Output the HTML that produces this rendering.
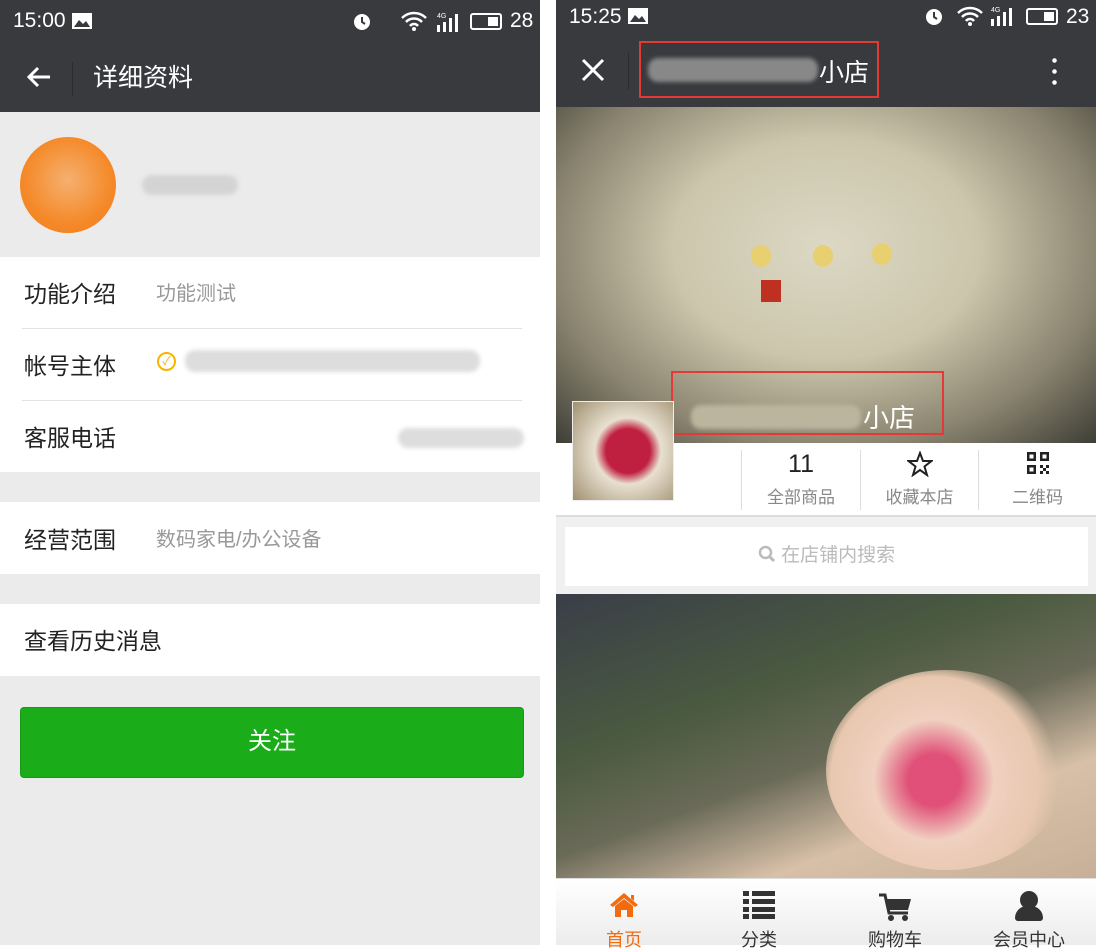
<!DOCTYPE html><html><head><meta charset="utf-8"><style>
*{margin:0;padding:0;box-sizing:border-box}
body{width:1096px;height:945px;background:#fff;font-family:"Liberation Sans","Noto Sans CJK SC",sans-serif;position:relative;overflow:hidden}
.a{position:absolute}
.L{left:0;top:0;width:540px;height:945px;background:#ebebeb}
.R{left:556px;top:0;width:540px;height:945px;background:#f0f0f0}
.row{position:absolute;left:0;width:540px;background:#fff}
.lab{position:absolute;left:24px;font-size:23px;color:#222}
.val{position:absolute;left:156px;font-size:20px;color:#999}
.blur{position:absolute;background:#d4d4d4;border-radius:10px;filter:blur(2px)}
</style></head><body>
<div class="a L">
 <div class="a" style="left:0;top:0;width:540px;height:112px;background:#393a3e"></div>
 <div class="a" style="left:13px;top:9px;color:#fff;font-size:21px">15:00</div>
 <svg class="a" style="left:72px;top:13px" width="20" height="16"><rect width="20" height="16" fill="#fff"/><path d="M2 14 L7 7 L11 11 L14 8 L18 14Z" fill="#393a3e"/></svg>
 <svg class="a" style="left:352px;top:11px" width="20" height="20"><circle cx="10" cy="11" r="8" fill="#fff"/><path d="M10 6 V11 L13 13" stroke="#393a3e" stroke-width="2" fill="none"/></svg>
 <svg class="a" style="left:400px;top:10px" width="28" height="22"><path d="M2 8 A17 17 0 0 1 26 8 M6 12 A11 11 0 0 1 22 12 M10 16 A5 5 0 0 1 18 16" stroke="#fff" stroke-width="2.5" fill="none"/><circle cx="14" cy="19" r="2" fill="#fff"/></svg>
 <svg class="a" style="left:436px;top:11px" width="28" height="22"><text x="1" y="7" font-size="7" fill="#fff" font-family="Liberation Sans">4G</text><rect x="1" y="14" width="3" height="7" fill="#fff"/><rect x="7" y="11" width="3" height="10" fill="#fff"/><rect x="13" y="7" width="3" height="14" fill="#fff"/><rect x="19" y="3" width="3" height="18" fill="#fff"/></svg>
 <div class="a" style="left:470px;top:13px;width:32px;height:17px;border:2px solid #fff;border-radius:3px"><div style="margin:2px 2px 0 auto;width:10px;height:9px;background:#fff"></div></div>
 <div class="a" style="left:510px;top:9px;color:#fff;font-size:21px">28</div>
 <svg class="a" style="left:26px;top:65px" width="26" height="24"><path d="M24 12 H3 M12 3 L3 12 L12 21" stroke="#fff" stroke-width="3" fill="none"/></svg>
 <div class="a" style="left:72px;top:62px;width:1px;height:34px;background:#2b2c2f"></div>
 <div class="a" style="left:93px;top:58px;color:#fff;font-size:25px">详细资料</div>
 <div class="a" style="left:20px;top:137px;width:96px;height:96px;border-radius:50%;background:radial-gradient(circle at 50% 45%,#f5b070,#f58a2a 60%,#f07a18)"></div>
 <div class="blur" style="left:142px;top:175px;width:96px;height:20px"></div>
 <div class="row" style="top:257px;height:215px"></div>
 <div class="lab" style="top:275px">功能介绍</div><div class="val" style="top:277px">功能测试</div>
 <div class="a" style="left:22px;top:328px;width:500px;height:1px;background:#e3e3e3"></div>
 <div class="lab" style="top:347px">帐号主体</div>
 <div class="a" style="left:157px;top:352px;width:19px;height:19px;border-radius:50%;border:2px solid #f4b400;color:#f4b400;font-size:12px;text-align:center;line-height:15px">✓</div>
 <div class="blur" style="left:185px;top:350px;width:295px;height:22px;background:#ddd"></div>
 <div class="a" style="left:22px;top:400px;width:500px;height:1px;background:#e3e3e3"></div>
 <div class="lab" style="top:419px">客服电话</div>
 <div class="blur" style="left:398px;top:428px;width:126px;height:20px;background:#ddd"></div>
 <div class="row" style="top:502px;height:72px"></div>
 <div class="lab" style="top:521px">经营范围</div><div class="val" style="top:523px">数码家电/办公设备</div>
 <div class="row" style="top:604px;height:72px"></div>
 <div class="lab" style="top:622px">查看历史消息</div>
 <div class="a" style="left:20px;top:707px;width:504px;height:71px;background:#1aad19;border:1px solid #179b16;border-radius:4px;color:#fff;font-size:24px;text-align:center;line-height:67px">关注</div>
</div>
<div class="a R">
 <div class="a" style="left:0;top:0;width:540px;height:107px;background:#393a3e"></div>
 <div class="a" style="left:13px;top:5px;color:#fff;font-size:21px">15:25</div>
 <svg class="a" style="left:72px;top:8px" width="20" height="16"><rect width="20" height="16" fill="#fff"/><path d="M2 14 L7 7 L11 11 L14 8 L18 14Z" fill="#393a3e"/></svg>
 <svg class="a" style="left:368px;top:6px" width="20" height="20"><circle cx="10" cy="11" r="8" fill="#fff"/><path d="M10 6 V11 L13 13" stroke="#393a3e" stroke-width="2" fill="none"/></svg>
 <svg class="a" style="left:400px;top:5px" width="28" height="22"><path d="M2 8 A17 17 0 0 1 26 8 M6 12 A11 11 0 0 1 22 12 M10 16 A5 5 0 0 1 18 16" stroke="#fff" stroke-width="2.5" fill="none"/><circle cx="14" cy="19" r="2" fill="#fff"/></svg>
 <svg class="a" style="left:434px;top:5px" width="28" height="22"><text x="1" y="7" font-size="7" fill="#fff" font-family="Liberation Sans">4G</text><rect x="1" y="14" width="3" height="7" fill="#fff"/><rect x="7" y="11" width="3" height="10" fill="#fff"/><rect x="13" y="7" width="3" height="14" fill="#fff"/><rect x="19" y="3" width="3" height="18" fill="#fff"/></svg>
 <div class="a" style="left:470px;top:8px;width:32px;height:17px;border:2px solid #fff;border-radius:3px"><div style="margin:2px 2px 0 auto;width:10px;height:9px;background:#fff"></div></div>
 <div class="a" style="left:510px;top:5px;color:#fff;font-size:21px">23</div>
 <svg class="a" style="left:25px;top:58px" width="24" height="24"><path d="M2 2 L22 22 M22 2 L2 22" stroke="#fff" stroke-width="3"/></svg>
 <div class="a" style="left:72px;top:52px;width:1px;height:38px;background:#2b2c2f"></div>
 <div class="a" style="left:83px;top:41px;width:240px;height:57px;border:2px solid #e53935"></div>
 <div class="blur" style="left:92px;top:58px;width:170px;height:24px;background:#888"></div>
 <div class="a" style="left:263px;top:53px;color:#fff;font-size:25px">小店</div>
 <div class="a" style="left:496px;top:55px;width:5px;height:30px;background:radial-gradient(circle,#fff 2px,transparent 2.5px) 0 0/5px 11px"></div>
 <div class="a" style="left:0;top:107px;width:540px;height:336px;background:radial-gradient(ellipse at 50% 42%,#dcd8c4 0%,#ccc6ac 40%,#8a8470 72%,#3e3e36 100%)"></div>
 <div class="a" style="left:195px;top:245px;width:20px;height:22px;border-radius:50%;background:#e8d070"></div>
 <div class="a" style="left:257px;top:245px;width:20px;height:22px;border-radius:50%;background:#e8d070"></div>
 <div class="a" style="left:316px;top:243px;width:20px;height:22px;border-radius:50%;background:#e8d070"></div>
 <div class="a" style="left:205px;top:280px;width:20px;height:22px;background:#c03020"></div>
 <div class="a" style="left:115px;top:371px;width:273px;height:64px;border:2px solid #e53935"></div>
 <div class="blur" style="left:135px;top:405px;width:170px;height:24px;background:#bcb59e"></div>
 <div class="a" style="left:307px;top:398px;color:#fff;font-size:26px">小店</div>
 <div class="a" style="left:0;top:443px;width:540px;height:74px;background:#fff;border-bottom:2px solid #ddd"></div>
 <div class="a" style="left:16px;top:401px;width:102px;height:100px;background:radial-gradient(circle at 55% 50%,#c02040 30%,#e8e0d0 45%,#a09070 100%);border:1px solid #eee"></div>
 <div class="a" style="left:185px;top:450px;width:1px;height:60px;background:#ddd"></div>
 <div class="a" style="left:304px;top:450px;width:1px;height:60px;background:#ddd"></div>
 <div class="a" style="left:422px;top:450px;width:1px;height:60px;background:#ddd"></div>
 <div class="a" style="left:186px;top:450px;width:118px;text-align:center;font-size:25px;color:#222">11</div>
 <div class="a" style="left:186px;top:483px;width:118px;text-align:center;font-size:17px;color:#888">全部商品</div>
 <svg class="a" style="left:351px;top:451px" width="26" height="26"><path d="M13 2 L16 10 L24.5 10 L17.5 15.5 L20 24 L13 19 L6 24 L8.5 15.5 L1.5 10 L10 10Z" stroke="#222" stroke-width="2" fill="none"/></svg>
 <div class="a" style="left:305px;top:483px;width:117px;text-align:center;font-size:17px;color:#888">收藏本店</div>
 <svg class="a" style="left:471px;top:452px" width="22" height="22"><path d="M0 0h9v9h-9zM13 0h9v9h-9zM0 13h9v9h-9z" fill="#222"/><path d="M2.5 2.5h4v4h-4zM15.5 2.5h4v4h-4zM2.5 15.5h4v4h-4z" fill="#fff"/><path d="M13 13h3v3h-3zM19 13h3v3h-3zM16 16h3v3h-3zM13 19h3v3h-3zM19 19h3v3h-3z" fill="#222"/></svg>
 <div class="a" style="left:423px;top:483px;width:117px;text-align:center;font-size:17px;color:#888">二维码</div>
 <div class="a" style="left:9px;top:527px;width:523px;height:59px;background:#fff;color:#bbb;font-size:19px;text-align:center;line-height:57px"><svg width="18" height="18" style="vertical-align:-2px"><circle cx="7.5" cy="7.5" r="5.5" stroke="#bbb" stroke-width="2.5" fill="none"/><path d="M11.5 11.5 L16 16" stroke="#bbb" stroke-width="3"/></svg> 在店铺内搜索</div>
 <div class="a" style="left:0;top:594px;width:540px;height:284px;background:linear-gradient(160deg,#3a3e48,#4a5a40 35%,#6a6a58 55%,#d8c0a8 75%,#c8b098)"></div>
 <div class="a" style="left:270px;top:670px;width:240px;height:200px;border-radius:50%;background:radial-gradient(circle at 45% 55%,#e05078 15%,#f0d0c0 35%,#e8c8b0 60%,transparent 72%)"></div>
 <div class="a" style="left:0;top:878px;width:540px;height:67px;background:linear-gradient(#fff,#ececec);border-top:1px solid #ddd"></div>
 <svg class="a" style="left:53px;top:892px" width="30" height="26"><path d="M15 1 L29 13 L26 15 L15 6 L4 15 L1 13Z M22 3 h3 v6 l-3 -2.5z" fill="#f26b0f"/><path d="M6 14 L15 7 L24 14 V25 H18 V18 H12 V25 H6Z" fill="#f26b0f"/></svg>
 <div class="a" style="left:12px;top:926px;width:112px;text-align:center;font-size:18px;color:#f26b0f">首页</div>
 <svg class="a" style="left:187px;top:891px" width="32" height="28"><path d="M0 0h6v5h-6zM9 0h23v5h-23zM0 8h6v5h-6zM9 8h23v5h-23zM0 16h6v5h-6zM9 16h23v5h-23zM0 23h6v5h-6zM9 23h23v5h-23z" fill="#333"/></svg>
 <div class="a" style="left:147px;top:926px;width:112px;text-align:center;font-size:18px;color:#333">分类</div>
 <svg class="a" style="left:322px;top:893px" width="34" height="28"><path d="M1 2 H7 L11 20 H30" stroke="#333" stroke-width="3" fill="none"/><path d="M8 6 H33 L30 17 H11Z" fill="#333"/><circle cx="13" cy="25" r="3" fill="#333"/><circle cx="27" cy="25" r="3" fill="#333"/></svg>
 <div class="a" style="left:283px;top:926px;width:112px;text-align:center;font-size:18px;color:#333">购物车</div>
 <div class="a" style="left:464px;top:891px;width:18px;height:18px;border-radius:50%;background:#333"></div>
 <div class="a" style="left:459px;top:906px;width:28px;height:15px;border-radius:12px 12px 3px 3px;background:#333"></div>
 <div class="a" style="left:417px;top:926px;width:112px;text-align:center;font-size:18px;color:#333">会员中心</div>
</div>
</body></html>
